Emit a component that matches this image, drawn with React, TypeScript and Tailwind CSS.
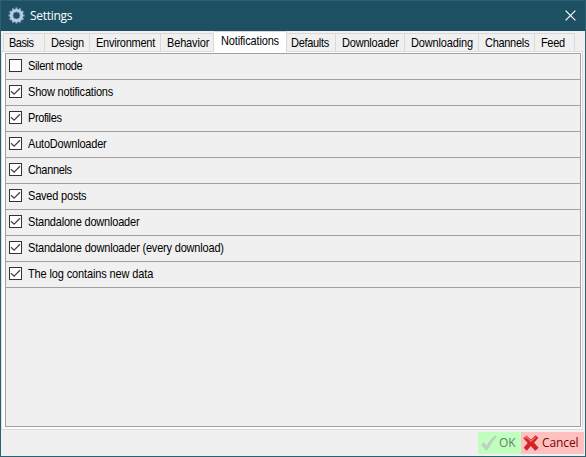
const tabs = [
  { label: 'Basis', box: 'w-[41px] pl-[5px]', track: 'tracking-[-0.5px]' },
  { label: 'Design', box: 'w-[45px] pl-[6px]', track: 'tracking-[-0.2px]' },
  { label: 'Environment', box: 'w-[71px] pl-[6px]', track: 'tracking-[-0.25px]' },
  { label: 'Behavior', box: 'w-[53px] pl-[6px]', track: 'tracking-[-0.15px]' },
  { label: 'Notifications', box: 'w-[73px] pl-[7px]', track: 'tracking-[-0.15px]', active: true },
  { label: 'Defaults', box: 'w-[49px] pl-[4px]', track: 'tracking-[-0.3px]' },
  { label: 'Downloader', box: 'w-[69px] pl-[6px]', track: 'tracking-[-0.2px]' },
  { label: 'Downloading', box: 'w-[74px] pl-[6px]', track: 'tracking-[-0.15px]' },
  { label: 'Channels', box: 'w-[56px] pl-[6px]', track: 'tracking-[-0.3px]' },
  { label: 'Feed', box: 'w-[40px] pl-[6px]', track: 'tracking-[-0.35px]' },
];

const options = [
  { label: 'Silent mode', track: 'tracking-[-0.35px]' },
  { label: 'Show notifications', track: 'tracking-[-0.2px]', checked: true },
  { label: 'Profiles', track: 'tracking-[-0.4px]', checked: true },
  { label: 'AutoDownloader', track: 'tracking-[-0.2px]', checked: true },
  { label: 'Channels', track: 'tracking-[-0.35px]', checked: true },
  { label: 'Saved posts', track: 'tracking-[-0.2px]', checked: true },
  { label: 'Standalone downloader', track: 'tracking-[-0.2px]', checked: true },
  { label: 'Standalone downloader (every download)', track: 'tracking-[-0.19px]', checked: true },
  { label: 'The log contains new data', track: 'tracking-[-0.13px]', checked: true },
];

function Gear() {
  return (
    <svg width="17" height="17" viewBox="0 0 17 17">
      <g stroke="#8eb0d3" strokeWidth="2.1">
        {[0, 30, 60, 90, 120, 150].map((a) => (
          <path key={a} d="M8.5 .5V3.5M8.5 13.5V16.5" transform={`rotate(${a} 8.5 8.5)`} />
        ))}
      </g>
      <circle cx="8.5" cy="8.5" r="5" fill="none" stroke="#bdcce2" strokeWidth="3.2" />
      <circle cx="8.5" cy="8.5" r="3.6" fill="none" stroke="#7797bc" strokeWidth=".7" />
    </svg>
  );
}

function Checkbox({ checked }: { checked?: boolean }) {
  return (
    <svg width="13" height="13" viewBox="0 0 13 13" className="shrink-0">
      <rect x=".5" y=".5" width="12" height="12" fill="#fff" stroke="#333" />
      {checked && <path d="M2 6.2 5.1 9.2 11 3.3" fill="none" stroke="#444" strokeWidth="1.3" />}
    </svg>
  );
}

export default function App() {
  return (
    <div className="flex h-[457px] w-[586px] flex-col overflow-hidden border border-[#2b6175] bg-[#f0f0f0] font-['Liberation_Sans',Arial,sans-serif] text-[11px] text-black">
      <header className="flex h-[30px] shrink-0 items-center bg-[#1d5063] pr-[9px] pb-[2px] pl-[7px] text-white">
        <Gear />
        <span className="ml-[5px] pt-px font-['Open_Sans',sans-serif] text-xs tracking-[-0.3px]">Settings</span>
        <svg className="ml-auto" width="11" height="11" viewBox="0 0 11 11">
          <path d="M.6.6 10.4 10.4M10.4.6.6 10.4" stroke="#fff" strokeWidth="1.2" />
        </svg>
      </header>

      <nav className="flex h-5 shrink-0 items-end border-l border-[#f0f0f0] pl-px">
        <span className="h-[18px] w-px bg-[#d9d9d9]" />
        {tabs.map((t) => (
          <div
            key={t.label}
            className={`${t.box} ${t.track} shrink-0 border-t border-r border-[#d9d9d9] whitespace-nowrap ${
              t.active ? 'z-10 -mb-px h-[21px] bg-white leading-[19px]' : 'h-[18px] bg-[#f0f0f0] leading-[18px]'
            }`}
          >
            <span className="block scale-y-110">{t.label}</span>
          </div>
        ))}
      </nav>

      <main className="mr-[2px] flex h-[379px] shrink-0 flex-col border border-[#dcdcdc] bg-white pt-px pr-px pb-[2px] pl-[3px]">
        <div className="flex-1 border border-[#a0a0a0] bg-[#f0f0f0]">
          {options.map((o) => (
            <label key={o.label} className="flex h-[26px] items-center border-b border-[#a0a0a0] pb-[2px] pl-[3px]">
              <Checkbox checked={o.checked} />
              <span className={`${o.track} ml-[6px] scale-y-110 pt-px leading-4 whitespace-nowrap`}>{o.label}</span>
            </label>
          ))}
        </div>
      </main>

      <footer className="mt-[2px] flex h-[22px] justify-end pr-px font-['Open_Sans',sans-serif] text-xs">
        <button className="flex w-[43px] items-center bg-[#c0ffc0] pl-[3px] text-[#617f61]">
          <svg width="16" height="16" viewBox="0 0 16 16" className="shrink-0">
            <path d="M.7 9.5 3 7.8 5.4 11.3Q9 4.5 14.4 1L15.3 1.8Q10 7 6.6 14.4L4.6 14.8Z" fill="#c5d0c5" stroke="#afbfaf" strokeWidth=".5" />
          </svg>
          <span className="ml-[2px]">OK</span>
        </button>
        <button className="flex w-[63px] items-center bg-[#ffc0c0] pl-[2px] text-[#800000]">
          <svg width="16" height="16" viewBox="0 0 16 16" className="shrink-0">
            <path d="M.7 3.2 3.6 1 8 5 12.4.7 15.1 2.8 10.8 7.7 15.3 12.8 12.2 15.4 7.8 10.7 3.8 15.4 1 12.8 5 7.9Z" fill="#d92121" stroke="#b13235" strokeWidth=".6" strokeLinejoin="round" />
            <path d="M2 3.3 3.6 2.2 8 6.3 12.4 2.1" fill="none" stroke="#f36b62" strokeWidth="1.3" />
          </svg>
          <span className="ml-[3px] tracking-[-0.1px]">Cancel</span>
        </button>
      </footer>
    </div>
  );
}
